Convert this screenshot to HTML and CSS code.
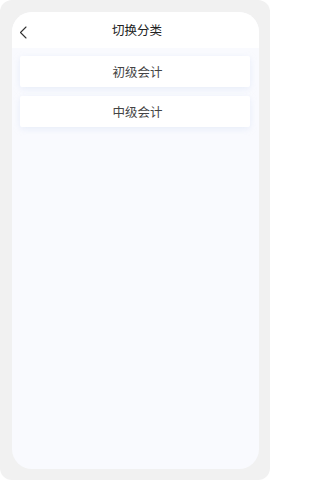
FILE: index.html
```html
<!DOCTYPE html>
<html lang="zh">
<head>
<meta charset="utf-8">
<link rel="stylesheet" href="styles.css">
</head>
<body>
<div class="frame">
  <div class="screen">
    <header class="header">
      <span class="back">
        <svg width="9" height="13" viewBox="0 0 9 13"><path d="M7 1 L1.5 6.5 L7 12" fill="none" stroke="#333" stroke-width="1.1" stroke-linecap="round" stroke-linejoin="round"/></svg>
      </span>
      <h1 class="title">切换分类</h1>
    </header>
    <main class="list">
      <div class="item">初级会计</div>
      <div class="item">中级会计</div>
    </main>
  </div>
</div>
</body>
</html>
```
FILE: styles.css
```css
html, body {
  margin: 0;
  padding: 0;
  background: #ffffff;
}
body {
  width: 270px;
  height: 480px;
  font-family: "Noto Sans CJK SC", "Noto Sans", sans-serif;
}
.frame {
  box-sizing: border-box;
  width: 270px;
  height: 480px;
  background: #f1f1f1;
  border-radius: 12px;
  padding: 12px 11px 11px 12px;
}
.screen {
  height: 100%;
  background: #f9fafe;
  border-radius: 20px;
  overflow: hidden;
  display: flex;
  flex-direction: column;
}
.header {
  height: 36px;
  background: #ffffff;
  display: flex;
  align-items: center;
  justify-content: center;
  position: relative;
  flex: none;
  padding-left: 3px;
}
.back {
  position: absolute;
  left: 7px;
  top: 14px;
  display: flex;
}
.title {
  margin: 0;
  font-size: 12.5px;
  font-weight: 400;
  color: #222;
  line-height: 1;
}
.list {
  padding: 8px 9px 0 8px;
  display: flex;
  flex-direction: column;
  gap: 9px;
}
.item {
  height: 31px;
  background: #ffffff;
  border-radius: 2px;
  box-shadow: 0 2px 6px rgba(200, 215, 240, 0.35);
  display: flex;
  align-items: center;
  justify-content: center;
  font-size: 12.5px;
  color: #444;
  padding-left: 5px;
}
```
